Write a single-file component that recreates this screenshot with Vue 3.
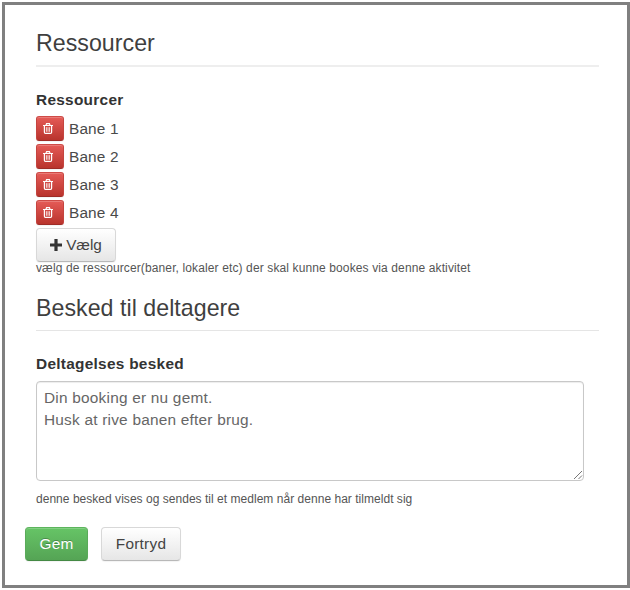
<template>
  <div class="page">
    <form class="activity-form" @submit.prevent>
      <!-- Ressourcer -->
      <h3 class="section-title resources-title">Ressourcer</h3>
      <label class="field-label resources-label">Ressourcer</label>
      <ul class="resource-list">
        <li v-for="resource in resources" :key="resource">
          <button type="button" class="btn btn-danger" @click="removeResource(resource)">
            <svg width="10" height="11" viewBox="0 0 10 11">
              <path
                d="M0 2.5H10M3 2.3L3.6 .6H6.4L7 2.3M1.4 2.8V9.3Q1.4 10.4 2.4 10.4H7.6Q8.6 10.4 8.6 9.3V2.8"
                fill="none"
                stroke="#fff"
                stroke-width="1.2"
              />
              <path d="M3.4 4.2V8.8M5 4.2V8.8M6.6 4.2V8.8" stroke="#fff" stroke-width=".8" />
            </svg>
          </button>
          <span>{{ resource }}</span>
        </li>
      </ul>
      <button type="button" class="btn btn-choose">
        <svg width="12" height="12" viewBox="0 0 12 12">
          <path d="M6 0V12M0 6H12" stroke="#333" stroke-width="3.2" />
        </svg>
        <span class="choose-text">Vælg</span>
      </button>
      <p class="help help-resources">
        vælg de ressourcer(baner, lokaler etc) der skal kunne bookes via denne aktivitet
      </p>

      <!-- Besked -->
      <h3 class="section-title message-title">Besked til deltagere</h3>
      <label class="field-label message-label" for="message">Deltagelses besked</label>
      <div class="message-box">
        <textarea id="message" v-model="message" spellcheck="false"></textarea>
        <svg class="grip" width="10" height="10" viewBox="0 0 10 10">
          <path d="M1 9L9 1M5.5 9L9 5.5" stroke="#777" stroke-width="1" />
        </svg>
      </div>
      <p class="help help-message">denne besked vises og sendes til et medlem når denne har tilmeldt sig</p>

      <div class="actions">
        <button type="submit" class="btn btn-success"><span>Gem</span></button>
        <button type="button" class="btn btn-cancel"><span>Fortryd</span></button>
      </div>
    </form>
  </div>
</template>

<script setup>
import { ref } from 'vue'

const resources = ref(['Bane 1', 'Bane 2', 'Bane 3', 'Bane 4'])
const message = ref('Din booking er nu gemt.\nHusk at rive banen efter brug.')

const removeResource = (resource) => {
  resources.value = resources.value.filter((r) => r !== resource)
}
</script>

<style>
body {
  background: #fff;
}
</style>

<style scoped>
.page {
  box-sizing: border-box;
  height: 590px;
  padding: 2px 0 2px 2px;
  overflow: hidden;
  font-family: 'Liberation Sans', Arial, sans-serif;
  font-size: 15.4px;
  color: #4a4a4a;
}
.activity-form {
  box-sizing: border-box;
  height: 586px;
  border: 3px solid #808080;
  padding: 21px 28px 0 31px;
}

.section-title {
  box-sizing: border-box;
  height: 40px;
  margin: 0;
  border-bottom: 1px solid #e5e5e5;
  font-size: 23.2px;
  line-height: 34px;
  font-weight: normal;
  letter-spacing: 0.03px;
  color: #3f3f3f;
}
.resources-title {
  height: 41px;
  border-bottom: 2px solid #eee;
}
.field-label {
  display: block;
  height: 22px;
  font-size: 15.4px;
  line-height: 22px;
  font-weight: bold;
  letter-spacing: 0.28px;
  color: #333;
}
.resources-label {
  margin-top: 22px;
}

/* Liste med baner */
.resource-list {
  list-style: none;
  margin: 5px 0 0;
  padding: 0;
}
.resource-list li {
  display: flex;
  gap: 5px;
  height: 28px;
  line-height: 26px;
  letter-spacing: 0.15px;
}

/* Knapper */
.btn {
  box-sizing: border-box;
  display: flex;
  align-items: center;
  justify-content: center;
  margin: 0;
  padding: 0;
  height: 34px;
  border: 1px solid #d8d8d8;
  border-bottom-color: #b8b8b8;
  border-radius: 4px;
  background: linear-gradient(#fff, #e6e6e6);
  box-shadow: inset 0 1px 0 rgba(255, 255, 255, 0.2), 0 1px 1px rgba(0, 0, 0, 0.05);
  font-family: inherit;
  font-size: 15.4px;
  letter-spacing: 0.25px;
  color: #444;
}
.btn-danger {
  width: 28px;
  height: 25px;
  padding: 0 4px 0 0;
  border-color: #cf4b47 #c5443f #9e2c27;
  border-radius: 3px;
  background: linear-gradient(#e55b57, #b9342d);
}
.btn-choose {
  width: 80px;
  padding-bottom: 1px;
  gap: 4px;
  font-size: 15.3px;
  letter-spacing: 0;
}
.btn-success {
  width: 63px;
  border-color: #5cb55c #5aaa5a #448944;
  background: linear-gradient(#66c466, #55a455);
  color: #fff;
  text-shadow: 0 -1px 0 rgba(0, 0, 0, 0.25);
}
.btn-cancel {
  width: 80px;
}
.help {
  margin: 0;
  height: 14px;
  font-size: 12px;
  line-height: 14px;
  letter-spacing: 0.12px;
  white-space: nowrap;
  color: #555;
}
.help-resources {
  margin-top: -1px;
}

/* Besked til deltagere */
.message-title {
  margin-top: 16px;
}
.message-label {
  margin-top: 22px;
}
.message-box {
  position: relative;
  width: 548px;
  height: 100px;
  margin-top: 6px;
}
.message-box textarea {
  box-sizing: border-box;
  display: block;
  width: 100%;
  height: 100%;
  margin: 0;
  padding: 5px 7px;
  border: 1px solid #c8c8c8;
  border-radius: 4px;
  outline: none;
  resize: none;
  box-shadow: inset 0 1px 1px rgba(0, 0, 0, 0.075);
  font-family: inherit;
  font-size: 15.4px;
  line-height: 22px;
  letter-spacing: 0.22px;
  color: #666;
}
.grip {
  position: absolute;
  right: 1px;
  bottom: 1px;
}
.help-message {
  margin-top: 11px;
  letter-spacing: 0.03px;
}
.actions {
  display: flex;
  gap: 13px;
  margin: 21px 0 0 -11px;
}
</style>
